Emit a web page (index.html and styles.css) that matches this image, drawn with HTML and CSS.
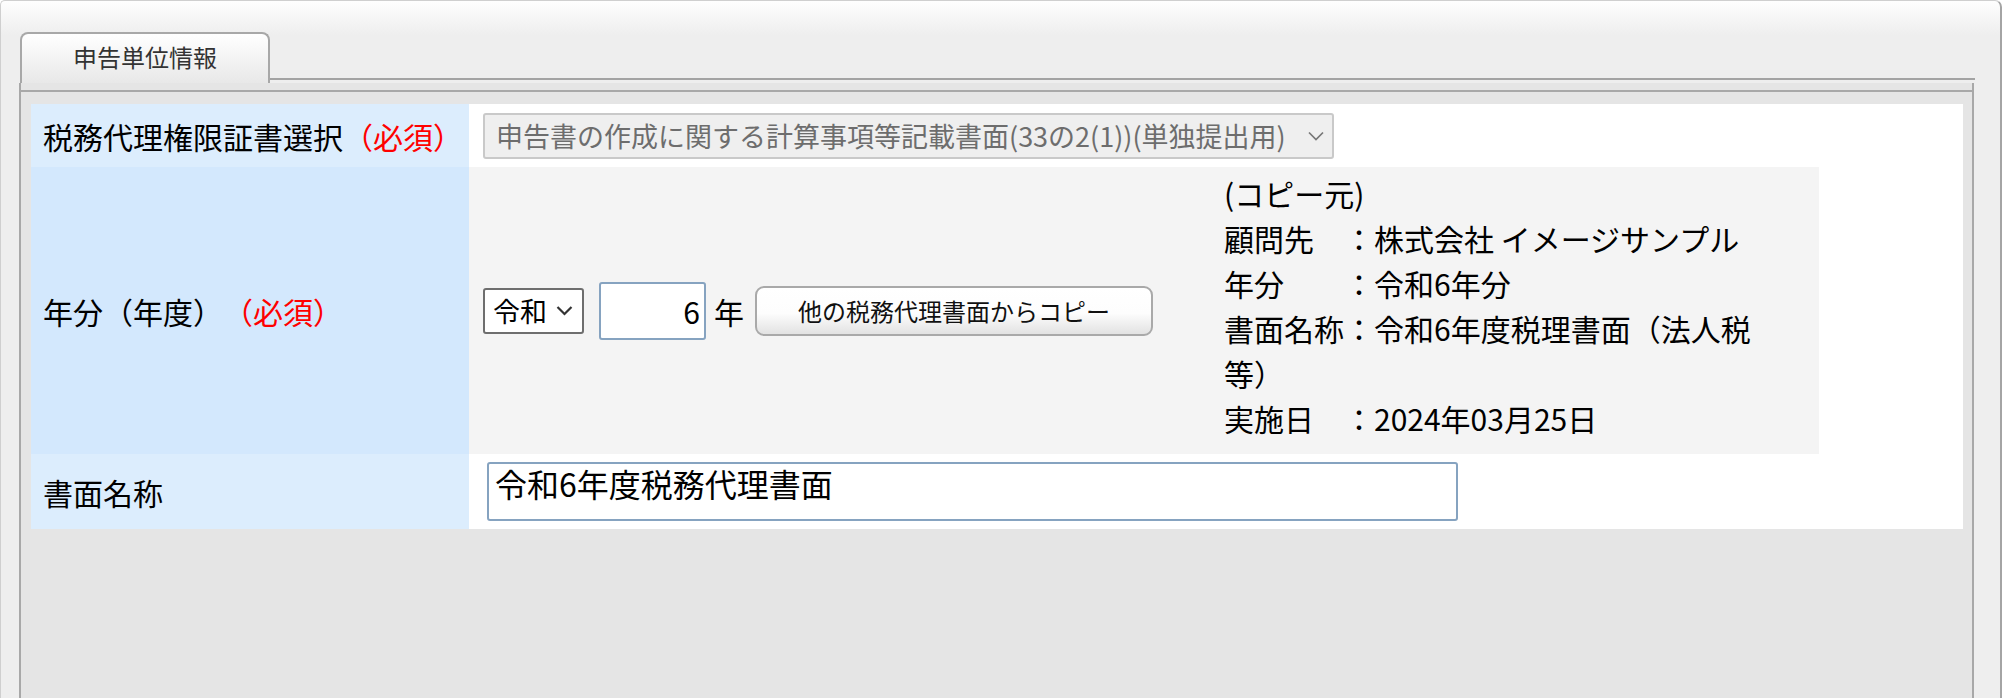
FILE: index.html
```html
<!DOCTYPE html>
<html lang="ja">
<head>
<meta charset="utf-8">
<title>申告単位情報</title>
<link rel="stylesheet" href="styles.css">
</head>
<body>
<div class="frame">
  <div class="tabs">
    <div class="tab">申告単位情報</div>
    <div class="tab-line"></div>
  </div>
  <div class="panel">
    <div class="panel-rule"></div>
    <div class="form">
      <div class="label label-light">税務代理権限証書選択<span class="req">（必須）</span></div>
      <div class="value">
        <div class="select select-disabled">
          <span>申告書の作成に関する計算事項等記載書面(33の2(1))(単独提出用)</span>
          <svg class="chev chev-light" width="16" height="10" viewBox="0 0 16 10"><path d="M1 1.5 L8 8.5 L15 1.5"/></svg>
        </div>
      </div>
      <div class="label label-mid">年分（年度）<span class="req">（必須）</span></div>
      <div class="value value-year">
        <div class="copy-box">
          <div class="select select-era">
            <span>令和</span>
            <svg class="chev" width="17" height="11" viewBox="0 0 17 11"><path d="M1.5 2 L8.5 9 L15.5 2"/></svg>
          </div>
          <input class="year-input" type="text" value="6">
          <span class="year-unit">年</span>
          <button class="copy-btn" type="button">他の税務代理書面からコピー</button>
          <div class="copy-info">
            <div>(コピー元)</div>
            <div>顧問先　：株式会社 イメージサンプル</div>
            <div>年分　　：令和6年分</div>
            <div>書面名称：令和6年度税理書面（法人税等）</div>
            <div>実施日　：2024年03月25日</div>
          </div>
        </div>
      </div>
      <div class="label label-light">書面名称</div>
      <div class="value">
        <textarea class="doc-name">令和6年度税務代理書面</textarea>
      </div>
    </div>
  </div>
</div>
</body>
</html>
```

FILE: styles.css
```css
* { box-sizing: border-box; }
html, body { margin: 0; padding: 0; }
body {
  width: 2005px;
  height: 698px;
  overflow: hidden;
  background: #ffffff;
  font-family: "Noto Sans CJK JP", "Noto Sans", sans-serif;
  color: #000;
}
.frame {
  width: 2002px;
  height: 698px;
  border: 1px solid #cfcfcf;
  border-right: 2px solid #a4a4a4;
  border-bottom: none;
  border-radius: 5px 7px 0 0;
  background: linear-gradient(#fefefe 0, #eeeeee 34px, #eeeeee 100%);
  padding: 31px 26px 0 18px;
  display: flex;
  flex-direction: column;
}
.tabs {
  display: flex;
  align-items: flex-end;
  height: 51px;
  flex: none;
}
.tab {
  width: 250px;
  height: 51px;
  margin-left: 1px;
  border: 2px solid #a8a8a8;
  border-bottom: none;
  border-radius: 8px 8px 0 0;
  background: linear-gradient(#ffffff, #e8e8e8);
  font-size: 24px;
  color: #333;
  text-align: center;
  line-height: 46px;
}
.tab-line {
  flex: 1;
  height: 2px;
  background: #a3a3a3;
  margin-bottom: 3px;
  margin-right: -1px;
}
.panel {
  flex: 1;
  border-left: 2px solid #a8a8a8;
  border-right: 2px solid #a8a8a8;
  background: #e5e5e5;
  padding: 7px 9px 0 10px;
}
.panel-rule {
  height: 2px;
  background: #a8a8a8;
  margin: 0 -9px 12px -10px;
}
.form {
  display: grid;
  grid-template-columns: 438px 1494px;
  grid-template-rows: 63px 287px 75px;
  background: #fff;
}
.label {
  display: flex;
  align-items: center;
  padding-left: 12px;
  font-size: 30px;
  white-space: nowrap;
}
.label-light { background: #dcedfd; }
.label-mid { background: #d3e8fd; }
.req { color: #f00; }
.value {
  display: flex;
  align-items: center;
  padding-left: 14px;
  background: #fff;
}
.value-year {
  padding-left: 0;
  align-items: stretch;
}
.copy-box {
  width: 1350px;
  background: #f4f4f4;
  display: flex;
  align-items: center;
  padding-left: 14px;
}
.select {
  display: flex;
  align-items: center;
  height: 46px;
  border-radius: 3px;
  background: #fff;
  white-space: nowrap;
}
.select-disabled {
  width: 851px;
  border: 2px solid #c9c9c9;
  background: #efefef;
  color: #6d6d6d;
  font-size: 27px;
  padding: 0 8px 0 11px;
}
.select-disabled .chev { margin-left: auto; }
.select-era {
  width: 101px;
  border: 2px solid #6e6e6e;
  font-size: 27px;
  padding-left: 8px;
  margin-right: 15px;
}
.select-era .chev { margin-left: 9px; }
.chev path {
  fill: none;
  stroke: #333;
  stroke-width: 2.2;
}
.chev-light path { stroke: #777; stroke-width: 1.7; }
.year-input {
  width: 107px;
  height: 58px;
  border: 2px solid #86a3c0;
  border-radius: 3px;
  font-family: inherit;
  font-size: 30px;
  color: #000;
  text-align: right;
  padding: 0 4px;
  margin: 0 8px 0 0;
  background: #fff;
}
.year-unit {
  font-size: 30px;
  margin-right: 11px;
}
.copy-btn {
  width: 398px;
  height: 50px;
  border: 2px solid #a9a9a9;
  border-radius: 9px;
  background: linear-gradient(#ffffff 0%, #fdfdfd 55%, #e2e2e2 100%);
  font-family: inherit;
  font-size: 24px;
  color: #111;
  padding: 0;
  margin: 0 71px 0 0;
}
.copy-info {
  width: 540px;
  font-size: 30px;
  line-height: 45px;
  margin-bottom: 10px;
}
.doc-name {
  width: 971px;
  height: 59px;
  margin: 0 0 0 4px;
  border: 2px solid #86a3c0;
  border-radius: 3px;
  font-family: inherit;
  font-size: 32px;
  line-height: 37px;
  padding: 1px 6px;
  resize: none;
  overflow: hidden;
  color: #000;
  background: #fff;
}
```
